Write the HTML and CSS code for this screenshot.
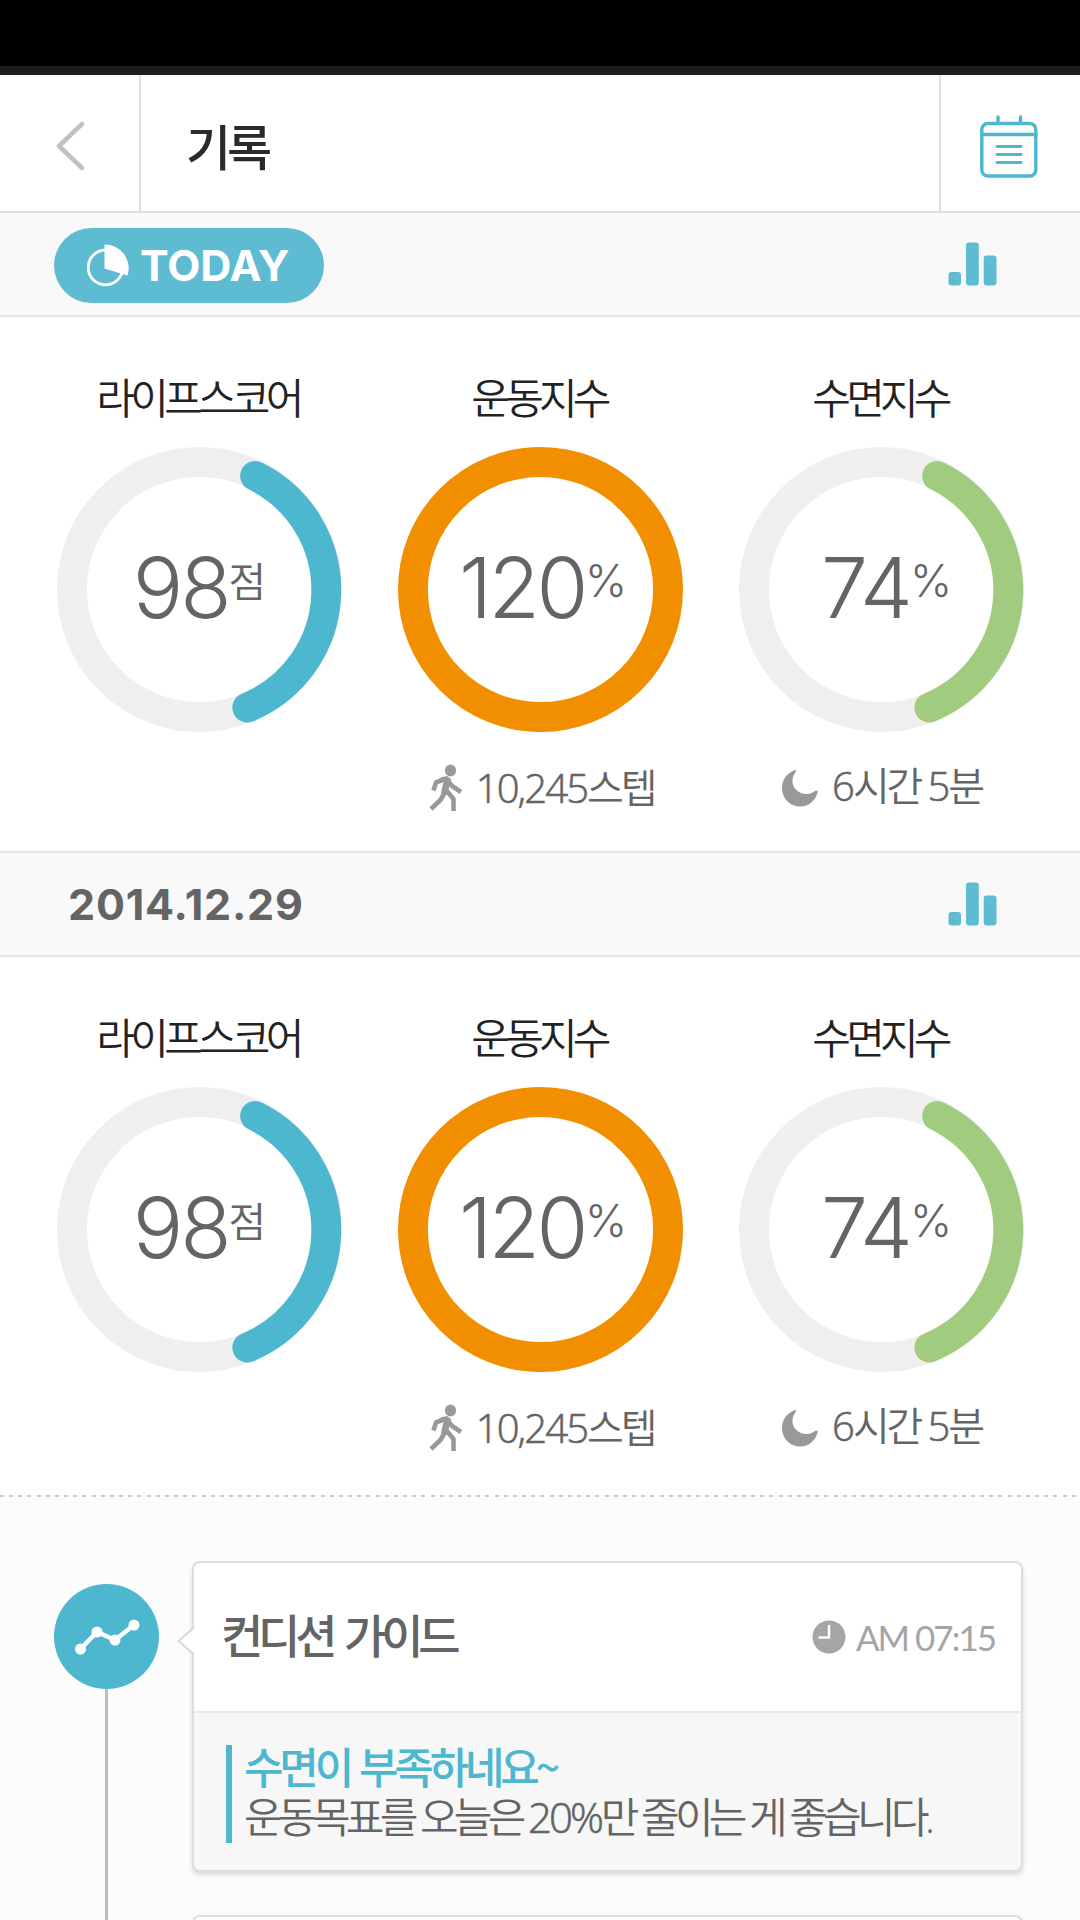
FILE: index.html
```
<!DOCTYPE html>
<html lang="ko">
<head>
<meta charset="UTF-8">
<meta name="viewport" content="width=device-width, initial-scale=1.0">
<title>기록</title>
<link rel="stylesheet" href="styles.css">
</head>
<body>
<!-- shared icons -->
<svg class="sprite" width="0" height="0">
  <symbol id="bars" viewBox="0 0 49 44">
    <rect x="0.5" y="30" width="12.5" height="13.5" rx="3"/>
    <rect x="18" y="0.5" width="12.8" height="43" rx="3"/>
    <rect x="35.7" y="13.5" width="12.8" height="30" rx="3"/>
  </symbol>
  <symbol id="walk" viewBox="0 0 34 48">
    <ellipse cx="21.5" cy="6.5" rx="5.6" ry="6"/>
    <path d="M15.500 15L7 18.500L4.500 26.500M18 15.500L23 22L32 28M16 28L11.500 36L2 45M18 27L24.500 35L24.500 47" fill="none" stroke="currentColor" stroke-width="4.600" stroke-linejoin="round"/>
    <path d="M11.500 13.500L18 12L22 15L18.500 31L12 29L14.500 18Z"/>
  </symbol>
  <symbol id="moon" viewBox="0 0 38 38">
    <path d="M13 1.500Q16 0 15 2.500C10 9 10.500 16.500 15.500 21C20 25.500 27 27 34 22Q37.500 20.500 36.500 24C33.500 33 27 37.500 19 37.500C9 37.500 1 29.500 1 19C1 11 5.500 4.500 13 1.500Z"/>
  </symbol>
</svg>

<div class="status-bar"></div>

<header class="header">
  <a href="#" class="back">
    <svg width="30" height="50" viewBox="0 0 30 50"><path d="M26 3L3 25L26 47"/></svg>
  </a>
  <h1>기록</h1>
  <a href="#" class="calendar">
    <svg width="58" height="64" viewBox="0 0 58 64">
      <rect x="1.800" y="8.500" width="54" height="52.500" rx="6"/>
      <path d="M2 19.500H56M18 2V8M40.500 2V8"/>
      <path class="thin" d="M17 31.500H41M17 39.500H41M17 47.500H41"/>
    </svg>
  </a>
</header>

<section class="day">
  <div class="day-bar">
    <div class="today">
      <svg width="44" height="44" viewBox="0 0 44 44">
        <circle cx="18.500" cy="24.500" r="17.300" fill="none" stroke="#fff" stroke-width="2.800"/>
        <path d="M17.500 1.500A23.700 23.700 0 0 1 40.500 32.500L17.500 25.500Z" fill="#fff"/>
      </svg>
      <span>TODAY</span>
    </div>
    <svg class="bars" width="49" height="44"><use href="#bars"/></svg>
  </div>
  <div class="metrics">
    <div class="metric">
      <h2>라이프스코어</h2>
      <div class="ring blue">
        <svg viewBox="0 0 286 286"><circle cx="143" cy="143" r="128"/><path d="M198.800 29A127.500 127.500 0 0 1 191 261.500"/></svg>
        <p class="value">98<sup class="ko">점</sup></p>
      </div>
    </div>
    <div class="metric">
      <h2>운동지수</h2>
      <div class="ring orange">
        <svg viewBox="0 0 286 286"><circle cx="143" cy="143" r="128"/></svg>
        <p class="value percent three">120<sup>%</sup></p>
      </div>
      <p class="detail"><svg width="34" height="48"><use href="#walk"/></svg><span><b>10,245</b>스텝</span></p>
    </div>
    <div class="metric">
      <h2>수면지수</h2>
      <div class="ring green">
        <svg viewBox="0 0 286 286"><circle cx="143" cy="143" r="128"/><path d="M198.800 29A127.500 127.500 0 0 1 191 261.500"/></svg>
        <p class="value percent">74<sup>%</sup></p>
      </div>
      <p class="detail sleep"><svg width="38" height="38"><use href="#moon"/></svg><span><b>6</b>시간 <b>5</b>분</span></p>
    </div>
  </div>
</section>

<section class="day past">
  <div class="day-bar">
    <div class="date">2014.12.29</div>
    <svg class="bars" width="49" height="44"><use href="#bars"/></svg>
  </div>
  <div class="metrics">
    <div class="metric">
      <h2>라이프스코어</h2>
      <div class="ring blue">
        <svg viewBox="0 0 286 286"><circle cx="143" cy="143" r="128"/><path d="M198.800 29A127.500 127.500 0 0 1 191 261.500"/></svg>
        <p class="value">98<sup class="ko">점</sup></p>
      </div>
    </div>
    <div class="metric">
      <h2>운동지수</h2>
      <div class="ring orange">
        <svg viewBox="0 0 286 286"><circle cx="143" cy="143" r="128"/></svg>
        <p class="value percent three">120<sup>%</sup></p>
      </div>
      <p class="detail"><svg width="34" height="48"><use href="#walk"/></svg><span><b>10,245</b>스텝</span></p>
    </div>
    <div class="metric">
      <h2>수면지수</h2>
      <div class="ring green">
        <svg viewBox="0 0 286 286"><circle cx="143" cy="143" r="128"/><path d="M198.800 29A127.500 127.500 0 0 1 191 261.500"/></svg>
        <p class="value percent">74<sup>%</sup></p>
      </div>
      <p class="detail sleep"><svg width="38" height="38"><use href="#moon"/></svg><span><b>6</b>시간 <b>5</b>분</span></p>
    </div>
  </div>
</section>

<section class="timeline">
  <div class="rail">
    <div class="badge">
      <svg width="68" height="40" viewBox="0 0 68 40">
        <path d="M7.500 32L24 15L42 23L61 8"/>
        <circle cx="7.500" cy="32" r="5.500"/><circle cx="24" cy="15" r="5.500"/><circle cx="42" cy="23" r="5.500"/><circle cx="61" cy="8" r="5.500"/>
      </svg>
    </div>
    <div class="rail-line"></div>
  </div>
  <div class="cards">
    <article class="card">
      <svg class="arrow" width="18" height="28" viewBox="0 0 18 28"><path d="M17 0.500L1.500 14L17 27.500" /></svg>
      <div class="card-head">
        <h3>컨디션 가이드</h3>
        <div class="time">
          <svg width="34" height="34" viewBox="0 0 34 34"><circle cx="17" cy="17" r="16.500"/><path d="M17 5V17.500H6.500"/></svg>
          <span>AM 07:15</span>
        </div>
      </div>
      <div class="card-body">
        <div class="message">
          <strong>수면이 부족하네요~</strong>
          <p>운동목표를 오늘은 <b>20%</b>만 줄이는 게 좋습니다.</p>
        </div>
      </div>
    </article>
    <article class="card"></article>
  </div>
</section>
</body>
</html>
```
FILE: styles.css
```
* {
  margin: 0;
  padding: 0;
  box-sizing: border-box;
}
body {
  width: 1080px;
  height: 1920px;
  overflow: hidden;
  background: #fff;
  color: #646464;
  font-family: "Noto Sans CJK KR", sans-serif;
}
svg {
  display: block;
  flex: none;
}
.sprite {
  position: absolute;
}
.status-bar {
  height: 75px;
  background: #000;
  border-bottom: 9px solid #1e1e1e;
}

/* Header */
.header {
  display: flex;
  height: 138px;
  border-bottom: 2px solid #dedede;
}
.back,
.calendar {
  display: flex;
  width: 141px;
  align-items: center;
}
.back {
  border-right: 2px solid #dedede;
  padding: 5px 0 0 56px;
}
.back path {
  fill: none;
  stroke: #c1c1c1;
  stroke-width: 4.5;
  stroke-linecap: round;
  stroke-linejoin: round;
}
.calendar {
  border-left: 2px solid #dedede;
  padding: 8px 0 0 39px;
}
.calendar svg {
  fill: none;
  stroke: #4cb7cf;
  stroke-width: 3.4;
  stroke-linecap: round;
}
.calendar .thin {
  stroke-width: 2.8;
}
.header h1 {
  flex: 1;
  padding-left: 45px;
  line-height: 140px;
  font-size: 49px;
  font-weight: 500;
  letter-spacing: -4px;
  color: #2a2a2a;
}

/* Day sections */
.day-bar {
  display: flex;
  height: 104px;
  align-items: center;
  justify-content: space-between;
  padding: 0 83px 0 54px;
  background: #f9f9f9;
  border-bottom: 2px solid #e6e6e6;
}
.bars {
  fill: #5dbcd2;
}
.today {
  display: flex;
  width: 270px;
  height: 75px;
  margin-top: 2px;
  align-items: center;
  gap: 9px;
  padding-left: 33px;
  border-radius: 38px;
  background: #5dbcd2;
  color: #fff;
  font: 700 43px Inter, sans-serif;
  letter-spacing: -0.1px;
}
.date {
  padding-left: 14px;
  font: 700 43px Inter, sans-serif;
  letter-spacing: 0.8px;
}
.metrics {
  display: grid;
  grid-template-columns: repeat(3, 1fr);
  height: 534px;
  padding: 50px 28px 0 29px;
}
.metric {
  display: flex;
  flex-direction: column;
  align-items: center;
}
.metric h2 {
  height: 80px;
  padding-right: 3px;
  line-height: 58px;
  font-size: 42px;
  font-weight: 350;
  letter-spacing: -4.8px;
  color: #222;
}
.ring {
  display: grid;
  width: 285px;
  height: 286px;
}
.ring > * {
  grid-area: 1 / 1;
}
.ring svg {
  fill: none;
  stroke-width: 30;
  stroke-linecap: round;
}
.ring circle {
  stroke: #efefef;
}
.blue path {
  stroke: #4cb7cf;
}
.green path {
  stroke: #a1cc80;
}
.orange circle {
  stroke: #f18f00;
}
.value {
  display: flex;
  align-items: flex-start;
  justify-content: center;
  padding-top: 89px;
  font: 300 84px/104px Inter, sans-serif;
  letter-spacing: -3px;
}
.value.percent {
  padding-left: 10px;
}
.value.three {
  padding-left: 5px;
  letter-spacing: -3.5px;
}
.value sup {
  font-size: 45px;
  line-height: 90px;
  letter-spacing: 0;
}
.value .ko {
  font-family: "Noto Sans CJK KR", sans-serif;
  font-size: 41px;
  font-weight: 350;
  line-height: 86px;
}
.detail {
  display: flex;
  height: 48px;
  margin-top: 31px;
  padding-left: 2px;
  align-items: center;
  gap: 13px;
  font: 350 40px/48px "Open Sans", "Noto Sans CJK KR", sans-serif;
  letter-spacing: -3.2px;
}
.detail b,
.message b {
  font-weight: 300;
  -webkit-text-stroke: 0.6px #646464;
}
.detail b {
  letter-spacing: -1.9px;
}
.detail svg {
  fill: #999;
  color: #999;
}
.detail.sleep {
  padding-left: 0;
}
.sleep span {
  margin-top: -4px;
}
.past .day-bar {
  height: 106px;
  border-top: 2px solid #e6e6e6;
}
.past .metrics {
  height: 538px;
}

/* Timeline */
.timeline {
  display: flex;
  height: 425px;
  padding: 66px 57px 0 54px;
  overflow: hidden;
  background: repeating-linear-gradient(90deg, #ccc 0 4px, #fcfcfc 4px 9.16px) 0 0 / 100% 2px no-repeat #fcfcfc;
}
.rail {
  display: flex;
  width: 105px;
  margin-right: 33px;
  padding-top: 23px;
  flex-direction: column;
  align-items: center;
}
.badge {
  display: flex;
  width: 105px;
  height: 105px;
  flex: none;
  align-items: center;
  justify-content: center;
  border-radius: 50%;
  background: #4cb7cf;
}
.badge svg {
  fill: #fff;
}
.badge path {
  fill: none;
  stroke: #fff;
  stroke-width: 4.5;
}
.rail-line {
  width: 3px;
  flex: 1;
  background: #bcbcbc;
}
.cards {
  flex: 1;
}
.card {
  position: relative;
  height: 311px;
  margin-bottom: 43px;
  border: 2px solid #dedede;
  border-radius: 8px;
  background: #fff;
  box-shadow: 0 3px 5px rgba(0, 0, 0, 0.14);
}
.arrow {
  position: absolute;
  left: -17px;
  top: 64px;
  fill: #fff;
  stroke: #d8d8d8;
  stroke-width: 2;
}
.card-head {
  display: flex;
  height: 150px;
  align-items: center;
  justify-content: space-between;
  padding: 0 26px 0 27px;
  border-bottom: 2px solid #e9e9e9;
}
.card h3 {
  padding-bottom: 8px;
  font-size: 46px;
  font-weight: 500;
  letter-spacing: -5.2px;
  word-spacing: 4px;
}
.time {
  display: flex;
  align-items: center;
  gap: 10px;
  color: #a5a5a5;
  font: 400 35px Lato, sans-serif;
  letter-spacing: -2px;
}
.time svg {
  fill: #a5a5a5;
}
.time path {
  fill: none;
  stroke: #fff;
  stroke-width: 2.5;
}
.card-body {
  height: 157px;
  padding: 32px 0 0 32px;
  border-radius: 0 0 6px 6px;
  background: #f7f7f7;
}
.message {
  height: 98px;
  padding-left: 12px;
  border-left: 6px solid #4cb7cf;
  white-space: nowrap;
}
.message strong {
  display: block;
  line-height: 40px;
  font-size: 43px;
  font-weight: 500;
  letter-spacing: -4.2px;
  word-spacing: 1px;
  color: #4cb7cf;
}
.message p {
  font: 350 42px/64px "Open Sans", "Noto Sans CJK KR", sans-serif;
  letter-spacing: -4.7px;
}
.message b {
  letter-spacing: -3px;
}
```
